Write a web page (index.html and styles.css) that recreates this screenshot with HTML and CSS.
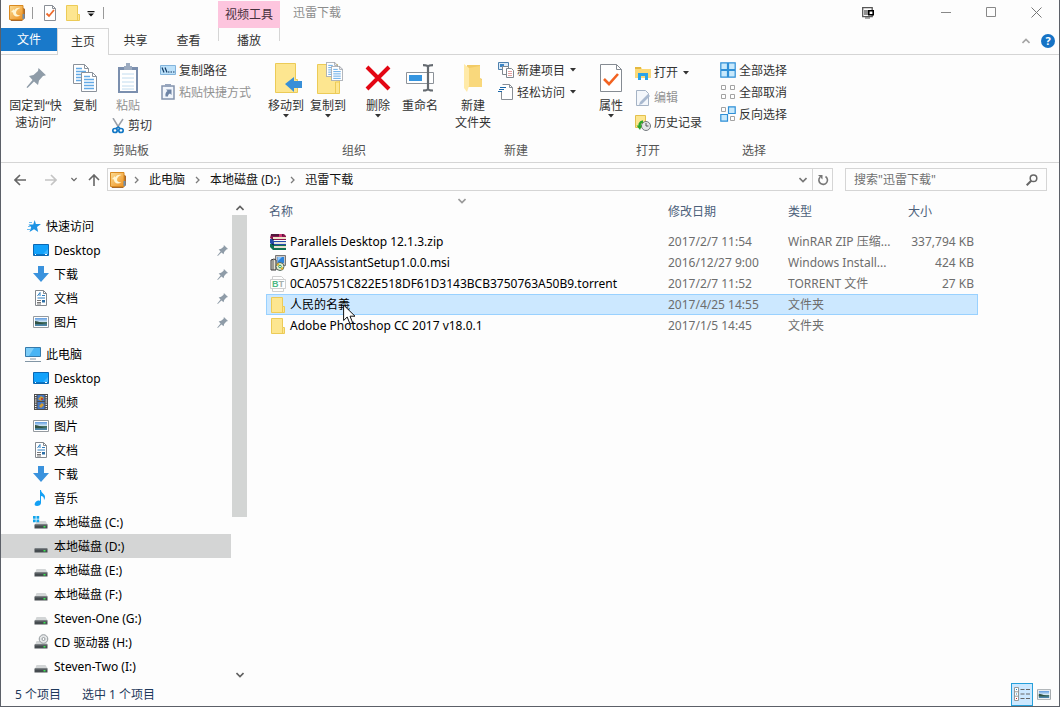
FILE: index.html
```html
<!DOCTYPE html>
<html lang="zh-CN">
<head>
<meta charset="utf-8">
<title>迅雷下载</title>
<link rel="stylesheet" href="styles.css">
</head>
<body>
<svg class="defs" aria-hidden="true">
  <defs>
    <linearGradient id="gold" x1="0" y1="0" x2="1" y2="1"><stop offset="0" stop-color="#fbdc92"/><stop offset="1" stop-color="#ee9020"/></linearGradient>
    <linearGradient id="sheet" x1="0" y1="0" x2="0" y2="1"><stop offset="0" stop-color="#5f9be0"/><stop offset=".5" stop-color="#d5e8f4"/><stop offset=".55" stop-color="#44705c"/><stop offset="1" stop-color="#4c87b8"/></linearGradient>
    <symbol id="app" viewBox="0 0 16 16"><path d="M13 2l3 2v9l-3 3H2l-1-2z" fill="#a9682a"/><path d="M.5.500h13.500v14H.5z" fill="url(#gold)" stroke="#d98a20"/><path d="M2 7l3-3v1.500C7 3 9 2.500 11.500 3 8.500 4 7 5.500 7 8c0 1.500 2 2.500 4.500 2.500C7 12.500 4 11 4 7.500z" fill="#fff6d4"/><path d="M14.500 9v5" stroke="#6d8fb0" stroke-width="2"/></symbol>
    <symbol id="doccheck" viewBox="0 0 12 16"><path d="M.5.5h8l3 3v12H.5z" fill="#fff" stroke="#8a8f96"/><path d="M8.500.5v3h3" fill="none" stroke="#8a8f96"/><path d="M2.500 8.500L5 11l5-6" fill="none" stroke="#ee6a2c" stroke-width="1.800"/></symbol>
    <symbol id="folder" viewBox="0 0 14 16"><path d="M.5.500h11v9h2v6H.5z" fill="#fde690" stroke="#eccb57"/><path d="M11.500 9.500v6" stroke="#eccb57"/></symbol>
    <symbol id="drop" viewBox="0 0 6 4"><path d="M0 0h6L3 3.500z" fill="currentColor"/></symbol>
    <symbol id="qdrop" viewBox="0 0 8 6"><path d="M.5 0h7v1.300h-7zM1 2.500h6L4 5.500z" fill="#111"/></symbol>
    <symbol id="pin" viewBox="0 0 20 20"><path d="M12.500 0L20 7.200l-3 .8-4 4.500-1 4.500-4-3.500L1.500 20l-1-.8L6.500 12 3 8l4.500-1L12 3z" fill="#8f9ca8"/></symbol>
    <symbol id="page" viewBox="0 0 16 20"><path d="M.5.5h11l4 4v15H.5z" fill="#fff" stroke="#8b929b"/><path d="M11.500.5v4h4" fill="none" stroke="#8b929b"/><path d="M3 4.500h6M3 7.500h10M3 10.500h10M3 13.500h10M3 16.500h10" stroke="#64aae6" stroke-width="1.300"/></symbol>
    <symbol id="copy" viewBox="0 0 24 28"><use href="#page" width="16" height="20"/><use href="#page" x="8" y="8" width="16" height="20"/></symbol>
    <symbol id="paste" viewBox="0 0 20 30"><path d="M0 4h20v26H0z" fill="#7b8fae"/><path d="M2 7h16v21H2z" fill="#fff"/><path d="M6 3h2V0h4v3h2v4H6z" fill="#9cabc0"/><path d="M4 11h12M4 15h12M4 19h12M4 23h12M4 26h12" stroke="#c2dcef"/></symbol>
    <symbol id="scissors" viewBox="0 0 12 16"><path d="M1 0l6 10M11 1L5 10" stroke="#9a9fa7" stroke-width="1.500"/><g fill="none" stroke="#1479c6" stroke-width="1.700"><ellipse cx="3" cy="12.500" rx="2.200" ry="2"/><ellipse cx="9" cy="12.500" rx="2.200" ry="2"/><path d="M4 10.500L6.500 9 8 10.500"/></g></symbol>
    <symbol id="copypath" viewBox="0 0 16 16"><path d="M.5 3.500h15v9H.5z" fill="#bce1fa" stroke="#82b4dc"/><path d="M2 5.500l2 5M5 5.500l2 5M8 10h1.500M10.500 10H12M13 10h1.500" stroke="#123b65" stroke-width="1.200"/></symbol>
    <symbol id="shortcut" viewBox="0 0 14 16"><path d="M1 2h12v13H1z" fill="#f1f5fb" stroke="#8393ad" stroke-width="1.500"/><path d="M4 0h6v3H4z" fill="#96a5bd"/><path d="M4.500 12.500c-.5-3 .5-4.500 2-5.500L5 5.500h5.500V11L9 9.500c-1.500.5-2 1.500-2 3z" fill="#6e84a5"/></symbol>
    <symbol id="moveto" viewBox="-6 0 34 30"><path d="M.5.500h20v16h2v13H.5z" fill="#fde690" stroke="#eccb57"/><path d="M10 21l9-7v4h8v7h-8v4z" fill="#388fd8"/></symbol>
    <symbol id="copyto" viewBox="-6 0 34 32"><path d="M.5 2.500h20v16h2v13H.5z" fill="#fde690" stroke="#eccb57"/><path d="M18.500 31v-11h4" fill="none" stroke="#eccb57"/><use href="#page" x="9" y="0" width="12" height="15"/><use href="#page" x="14" y="4" width="12" height="15"/></symbol>
    <symbol id="delete" viewBox="0 0 26 26"><path d="M2 2l22 22M24 2L2 24" stroke="#e30613" stroke-width="4"/></symbol>
    <symbol id="rename" viewBox="0 0 28 28"><path d="M.5 8.500h27v11H.5z" fill="#fff" stroke="#8c9299"/><path d="M3 11h13v6H3z" fill="#3595e0"/><path d="M22 2v24M17 1.200c3 0 5 .3 5 2 0-1.700 2-2 5-2M17 26.500c3 0 5-.3 5-2 0 1.700 2 2 5 2" fill="none" stroke="#646a70" stroke-width="2.200"/></symbol>
    <symbol id="newfolder" viewBox="0 0 18 28"><path d="M3 1h13v13l2 1v8H3z" fill="#f2cb66"/><path d="M0 0l5 4v18l-2 6-3-4z" fill="#ffeaa8"/><path d="M5 4l11-2v13l2 1v7H5z" fill="#f9d87c"/></symbol>
    <symbol id="newitem" viewBox="0 0 16 16"><path d="M.5.500h10v7H.5z" fill="#dcebf8" stroke="#4d80ad"/><path d="M2 2h4v3H2z" fill="#3c85c4"/><path d="M4.500 4.500h6v8h-6z" fill="#fff" stroke="#7f878e"/><path d="M8.500 6.500h5l2 2v7h-7z" fill="#fff" stroke="#7f878e"/><path d="M10 9.500h4M10 11.500h4M10 13.500h4" stroke="#e29f9f"/></symbol>
    <symbol id="easy" viewBox="0 0 16 16"><path d="M4.500.500h7l3 3v12h-11V8" fill="#fff" stroke="#888e95"/><path d="M11.500.5v3h3" fill="none" stroke="#888e95"/><path d="M2 3.500h6M1 5.500h5M0 7.500h4" stroke="#1a66a8" stroke-width="1.200"/></symbol>
    <symbol id="props" viewBox="0 0 22 28"><path d="M.5.500h16l5 5v22H.5z" fill="#fff" stroke="#858b92"/><path d="M16.500.5v5h5" fill="none" stroke="#858b92"/><path d="M4 15l5 5 9-10" fill="none" stroke="#f26322" stroke-width="2.600"/></symbol>
    <symbol id="open" viewBox="0 0 16 16"><path d="M0 2h6l1 2h9v9H0z" fill="#fbd978"/><path d="M0 2h6v2H0z" fill="#e5b93f"/><path d="M3 15V8h10v7h-3v-4H6v4z" fill="#29a3ea"/></symbol>
    <symbol id="edit" viewBox="0 0 14 16"><path d="M.5.500h9l3 3v12H.5z" fill="#f4f7fb" stroke="#a5b3c5"/><path d="M4 12l8-8 2 2-8 8-3 1z" fill="#a9b9cf"/></symbol>
    <symbol id="history" viewBox="0 0 16 16"><path d="M.5.500h10v12H.5z" fill="#fde690" stroke="#e3c04d"/><circle cx="11" cy="11" r="4.500" fill="#e4e6e8" stroke="#74797e"/><path d="M11 8v3h2.500" fill="none" stroke="#555"/><path d="M8 6.500C4.500 7 4 10 5 12.500" fill="none" stroke="#2aa52c" stroke-width="2.400"/><path d="M1.500 10.500h5.500L5 15z" fill="#2aa52c"/></symbol>
    <symbol id="selall" viewBox="0 0 16 16"><g fill="#c8e9fc" stroke="#2f8fd6" stroke-width="1.200"><path d="M.8.800h6.700v6.700H.8zM8.500.800h6.700v6.700H8.500zM.8 8.500h6.700v6.700H.8zM8.500 8.500h6.700v6.700H8.500z"/></g></symbol>
    <symbol id="selnone" viewBox="0 0 16 16"><path d="M1.500 1.500h4v4h-4zM10.500 1.500h4v4h-4zM1.500 10.500h4v4h-4zM10.500 10.500h4v4h-4z" fill="#fff" stroke="#a3a3a3"/></symbol>
    <symbol id="selinv" viewBox="0 0 16 16"><path d="M1.500 1.500h4v4h-4zM10.500 10.500h4v4h-4z" fill="#fff" stroke="#a3a3a3"/><path d="M8.500.800h6.700v6.700H8.500zM.8 8.500h6.700v6.700H.8z" fill="#c8e9fc" stroke="#2f8fd6" stroke-width="1.200"/></symbol>
    <symbol id="up" viewBox="0 0 8 6"><path d="M.5 5L4 1.500 7.500 5" fill="none" stroke="currentColor" stroke-width="1.600"/></symbol>
    <symbol id="down" viewBox="0 0 8 6"><path d="M.5 1L4 4.500 7.500 1" fill="none" stroke="currentColor" stroke-width="1.600"/></symbol>
    <symbol id="right" viewBox="0 0 5 8"><path d="M1 1l3 3-3 3" fill="none" stroke="#7c7c7c" stroke-width="1.300"/></symbol>
    <symbol id="arrow" viewBox="0 0 12 12"><path d="M12 6H1.500M6 1L1 6l5 5" fill="none" stroke="currentColor" stroke-width="1.600"/></symbol>
    <symbol id="star" viewBox="0 0 16 16"><path d="M9.700 2l1.200 4H16l-4 3 1.200 5-4.200-2.800L4.500 14l1.700-4.700L3.500 6.500h4.700z" fill="#1d93e4"/><path d="M4 4.500h3M2 11.500h3M3 8.500h2" stroke="#6cbcf0"/></symbol>
    <symbol id="desktop" viewBox="0 0 16 16"><path d="M.5 2.500h15v11H.5z" fill="#12a2fb" stroke="#0a68b4"/><path d="M1 12.500h14" stroke="#0a75c4"/><path d="M10 12l5-5v5z" fill="#3cb5ff"/><path d="M2 12.500h1M12 12.500h2" stroke="#fff"/></symbol>
    <symbol id="downloads" viewBox="0 0 16 16"><path d="M5 0h6v7h5l-8 9-8-9h5z" fill="#3a92dd"/></symbol>
    <symbol id="docs" viewBox="0 0 16 16"><path d="M2.500.500h8l3 3v12h-11z" fill="#fff" stroke="#82888e"/><path d="M10.500.5v3h3" fill="none" stroke="#82888e"/><path d="M4.500 6L7 2.500V6M9 5.500h3M4.500 8h7.500" fill="none" stroke="#2c7fc2"/><path d="M4 10.500h4M4 12.500h4M4 14h4" stroke="#777"/><path d="M9 10h3v2.500H9z" fill="#2b6ea6"/></symbol>
    <symbol id="pics" viewBox="0 0 16 12"><path d="M.5.500h15v11H.5z" fill="#fff" stroke="#949a9f"/><path d="M2 2h12v8H2z" fill="url(#sheet)"/><path d="M2 5c4 0 7 3 12 3H2z" fill="#315345"/></symbol>
    <symbol id="pc" viewBox="0 0 16 16"><path d="M.5 1.500h15v9H.5z" fill="#48b4f4" stroke="#367aab"/><path d="M1 2h8l-5 8H1z" fill="#7dcdf8"/><path d="M5 13h6M0 15.500h16" stroke="#8296a5"/></symbol>
    <symbol id="video" viewBox="0 0 14 16"><path d="M0 0h14v16H0z" fill="#4c4c4c"/><path d="M3.500 1h7v6h-7zM3.500 8h7v7h-7z" fill="#4477c3"/><path d="M4 5l3-3 3 2-3 3zM5 12l3-3 2 2-3 3z" fill="#d29d35"/><path d="M7 4h2v2H7z" fill="#bb4431"/><path d="M1.700 1v14M12.300 1v14" stroke="#fff" stroke-width="1.500" stroke-dasharray="1 1.200"/></symbol>
    <symbol id="music" viewBox="0 0 16 16"><path d="M7 0h1c0 3 4 4 4 7 0 2-1 3-1 3 0-3-1-4-3-4v7c0 2-2 3-4 3s-3-1-2-3 3-3 5-2z" fill="#14a0f4"/></symbol>
    <symbol id="drive" viewBox="0 0 16 16"><path d="M3.500 7h9L15 11H2z" fill="#d2d5d6"/><path d="M1.500 10.500h13v4h-13z" fill="#454b4f"/><path d="M2 11h12" stroke="#6d7377"/><path d="M10.500 12h2v1.500h-2z" fill="#39e951"/></symbol>
    <symbol id="sysdrive" viewBox="0 0 16 16"><use href="#drive" width="16" height="16"/><path d="M0 2h2.700v2.700H0zM3.500 2h2.700v2.700H3.500zM0 5.500h2.700v2.700H0zM3.500 5.500h2.700v2.700H3.500z" fill="#13a5eb"/></symbol>
    <symbol id="cd" viewBox="0 0 16 16"><use href="#drive" width="16" height="16"/><circle cx="10.500" cy="5" r="4.300" fill="#e5e7e8" stroke="#93999d"/><circle cx="10.500" cy="5" r="1.500" fill="#fff" stroke="#93999d"/></symbol>
    <symbol id="rar" viewBox="0 0 16 16"><path d="M1 0h13l2 2v4H3L0 4z" fill="#8c174f"/><path d="M3 3h13v2H3z" fill="#eee5ca"/><path d="M0 5h2l2 2h12v4H2L0 9z" fill="#244cab"/><path d="M4 8h12v2H4z" fill="#e3e3dd"/><path d="M0 10h2l2 1h12v5H3l-3-3z" fill="#137152"/><path d="M4 12h12v2H4z" fill="#e8e1cf"/><path d="M1 1h12M2 5l2 1M2 10l2 1" stroke="#161b28"/><path d="M9 0h3v3H9z" fill="#cc3b75"/></symbol>
    <symbol id="msi" viewBox="0 0 16 16"><path d="M5.500.500h10v10h-10z" fill="#c8c8c8" stroke="#777"/><path d="M7.500 2h6.500v6H7.500z" fill="#2d83da"/><path d="M8 2h4L8 6z" fill="#8cc8ff"/><path d="M1 5l3-1 2 1v10H1z" fill="#e4e2d5" stroke="#333"/><path d="M3 5v10" stroke="#555"/><circle cx="10" cy="11.500" r="4" fill="#e8ead4" stroke="#4e6559"/><circle cx="10" cy="11.500" r="1.300" fill="#fff" stroke="#23a157"/><path d="M7 10l2-1M11 14l2-1" stroke="#e0b32b" stroke-width="2"/></symbol>
    <symbol id="bt" viewBox="0 0 16 16"><path d="M2.500 3.500v-3h9l2 2v1M2.500 13v2.500h11V13" fill="#fff" stroke="#cfcfcf"/><path d="M.5 3.500h15v9H.5z" fill="#fff" stroke="#cfcfcf"/><text x="2" y="11" font-family="Liberation Sans, sans-serif" font-size="9" font-weight="700" fill="#50b886">B<tspan fill="#a5b0ab">T</tspan></text></symbol>
    <symbol id="cursor" viewBox="0 0 13 21"><path d="M.6 1v15.500L4.200 13l2.800 7 2.700-1.200L7 12.200h5z" fill="#fff" stroke="#111"/></symbol>
  </defs>
</svg>

<div class="window">
  <header class="titlebar">
    <div class="quick">
      <svg class="i16"><use href="#app"/></svg>
      <span class="sep"></span>
      <button class="plain" aria-label="属性"><svg class="q-doc"><use href="#doccheck"/></svg></button>
      <button class="plain" aria-label="新建文件夹"><svg class="q-folder"><use href="#folder"/></svg></button>
      <button class="plain" aria-label="自定义快速访问工具栏"><svg class="q-drop"><use href="#qdrop"/></svg></button>
      <span class="sep"></span>
    </div>
    <div class="context-title">视频工具</div>
    <h1 class="title">迅雷下载</h1>
    <button class="plain overlay-tool" aria-label="画中画"><svg width="12" height="12" viewBox="0 0 12 12"><path d="M.7.700h9.500v9H.7zM3 3v5M5 3v5" fill="none" stroke="#555" stroke-width="1.300"/><path d="M6.800 3.800h4.400v4H6.800z" fill="#fff" stroke="#000" stroke-width="1.600"/><path d="M3 11h5" stroke="#555"/></svg></button>
    <div class="controls">
      <button class="plain" aria-label="最小化"><svg width="11" height="11"><path d="M0 5.500h10" stroke="#888"/></svg></button>
      <button class="plain" aria-label="最大化"><svg width="11" height="11"><path d="M.5.500h9v9H.5z" fill="none" stroke="#888"/></svg></button>
      <button class="plain" aria-label="关闭"><svg width="11" height="11"><path d="M.5.500l10 10M10.500.500l-10 10" stroke="#777"/></svg></button>
    </div>
  </header>

  <nav class="tabs">
    <button class="tab file">文件</button>
    <button class="tab active">主页</button>
    <button class="tab">共享</button>
    <button class="tab">查看</button>
    <button class="tab play">播放</button>
    <span class="grow"></span>
    <button class="plain collapse" aria-label="最小化功能区"><svg class="caret"><use href="#up"/></svg></button>
    <button class="help" aria-label="帮助">?</button>
  </nav>

  <section class="ribbon">
    <div class="group g-clip">
      <div class="tools">
        <button class="big wide"><svg class="pinbig"><use href="#pin"/></svg><span>固定到“快<br>速访问”</span></button>
        <button class="big copybtn"><svg width="24" height="28"><use href="#copy"/></svg><span>复制</span></button>
        <div class="pastecol">
          <button class="big muted pastebtn"><svg width="20" height="30"><use href="#paste"/></svg><span>粘贴</span></button>
          <button class="small cut"><svg width="12" height="16"><use href="#scissors"/></svg>剪切</button>
        </div>
        <div class="stack">
          <button class="small"><svg class="i16"><use href="#copypath"/></svg>复制路径</button>
          <button class="small muted"><svg class="i16"><use href="#shortcut"/></svg>粘贴快捷方式</button>
        </div>
      </div>
      <h2>剪贴板</h2>
    </div>
    <div class="group g-org">
      <div class="tools">
        <button class="big"><svg width="34" height="30"><use href="#moveto"/></svg><span>移动到</span><svg class="drop"><use href="#drop"/></svg></button>
        <button class="big"><svg width="34" height="32"><use href="#copyto"/></svg><span>复制到</span><svg class="drop"><use href="#drop"/></svg></button>
        <button class="big del"><svg width="26" height="26"><use href="#delete"/></svg><span>删除</span><svg class="drop"><use href="#drop"/></svg></button>
        <button class="big"><svg width="28" height="28"><use href="#rename"/></svg><span>重命名</span></button>
      </div>
      <h2>组织</h2>
    </div>
    <div class="group g-new">
      <div class="tools">
        <button class="big"><svg width="18" height="28"><use href="#newfolder"/></svg><span>新建<br>文件夹</span></button>
        <div class="stack">
          <button class="small"><svg class="i16"><use href="#newitem"/></svg>新建项目<svg class="drop"><use href="#drop"/></svg></button>
          <button class="small"><svg class="i16"><use href="#easy"/></svg>轻松访问<svg class="drop"><use href="#drop"/></svg></button>
        </div>
      </div>
      <h2>新建</h2>
    </div>
    <div class="group g-open">
      <div class="tools">
        <button class="big propbtn"><svg width="22" height="28"><use href="#props"/></svg><span>属性</span><svg class="drop"><use href="#drop"/></svg></button>
        <div class="stack loose">
          <button class="small"><svg class="i16"><use href="#open"/></svg>打开<svg class="drop"><use href="#drop"/></svg></button>
          <button class="small muted"><svg class="i16"><use href="#edit"/></svg>编辑</button>
          <button class="small"><svg class="i16"><use href="#history"/></svg>历史记录</button>
        </div>
      </div>
      <h2>打开</h2>
    </div>
    <div class="group g-sel">
      <div class="tools">
        <div class="stack">
          <button class="small"><svg class="i16"><use href="#selall"/></svg>全部选择</button>
          <button class="small"><svg class="i16"><use href="#selnone"/></svg>全部取消</button>
          <button class="small"><svg class="i16"><use href="#selinv"/></svg>反向选择</button>
        </div>
      </div>
      <h2>选择</h2>
    </div>
  </section>

  <div class="navbar">
    <div class="history">
      <button class="plain" aria-label="后退"><svg class="arr"><use href="#arrow"/></svg></button>
      <button class="plain off" aria-label="前进"><svg class="arr fwd"><use href="#arrow"/></svg></button>
      <button class="plain" aria-label="最近浏览的位置"><svg class="recent"><use href="#down"/></svg></button>
      <button class="plain" aria-label="上移"><svg class="arr upward"><use href="#arrow"/></svg></button>
    </div>
    <div class="address">
      <svg class="addr-icon"><use href="#app"/></svg>
      <svg class="crumb first"><use href="#right"/></svg>
      <a href="#pc">此电脑</a>
      <svg class="crumb"><use href="#right"/></svg>
      <a href="#d">本地磁盘 (D:)</a>
      <svg class="crumb"><use href="#right"/></svg>
      <a href="#xl">迅雷下载</a>
      <span class="grow"></span>
      <button class="plain addr-drop" aria-label="以前的位置"><svg class="caret"><use href="#down"/></svg></button>
      <button class="plain refresh" aria-label="刷新"><svg width="12" height="12" viewBox="0 0 12 12"><path d="M8.500 2.500A4.300 4.300 0 1 1 3 3.200" fill="none" stroke="#777" stroke-width="1.600"/><path d="M1 1h4.500v4.500z" fill="#777"/></svg></button>
    </div>
    <label class="search">
      <input type="text" placeholder='搜索"迅雷下载"' aria-label="搜索">
      <svg width="12" height="12" viewBox="0 0 12 12"><circle cx="7.500" cy="4.300" r="3.300" fill="none" stroke="#666" stroke-width="1.500"/><path d="M5.200 6.800L.7 11.300" stroke="#666" stroke-width="2"/></svg>
    </label>
  </div>

  <div class="content">
    <aside class="side">
      <div class="tree">
        <ul>
          <li><a class="root" href="#quick"><svg class="i16"><use href="#star"/></svg>快速访问</a></li>
          <li><a href="#desk"><svg class="i16"><use href="#desktop"/></svg>Desktop<svg class="pinned"><use href="#pin"/></svg></a></li>
          <li><a href="#dl"><svg class="i16"><use href="#downloads"/></svg>下载<svg class="pinned"><use href="#pin"/></svg></a></li>
          <li><a href="#doc"><svg class="i16"><use href="#docs"/></svg>文档<svg class="pinned"><use href="#pin"/></svg></a></li>
          <li><a href="#pic"><svg class="i16"><use href="#pics"/></svg>图片<svg class="pinned"><use href="#pin"/></svg></a></li>
        </ul>
        <ul>
          <li><a class="root" href="#pc"><svg class="i16"><use href="#pc"/></svg>此电脑</a></li>
          <li><a href="#desk"><svg class="i16"><use href="#desktop"/></svg>Desktop</a></li>
          <li><a href="#vid"><svg class="i16"><use href="#video"/></svg>视频</a></li>
          <li><a href="#pic"><svg class="i16"><use href="#pics"/></svg>图片</a></li>
          <li><a href="#doc"><svg class="i16"><use href="#docs"/></svg>文档</a></li>
          <li><a href="#dl"><svg class="i16"><use href="#downloads"/></svg>下载</a></li>
          <li><a href="#mus"><svg class="i16"><use href="#music"/></svg>音乐</a></li>
          <li><a href="#c"><svg class="i16"><use href="#sysdrive"/></svg>本地磁盘 (C:)</a></li>
          <li><a class="current" href="#d"><svg class="i16"><use href="#drive"/></svg>本地磁盘 (D:)</a></li>
          <li><a href="#e"><svg class="i16"><use href="#drive"/></svg>本地磁盘 (E:)</a></li>
          <li><a href="#f"><svg class="i16"><use href="#drive"/></svg>本地磁盘 (F:)</a></li>
          <li><a href="#g"><svg class="i16"><use href="#drive"/></svg>Steven-One (G:)</a></li>
          <li><a href="#h"><svg class="i16"><use href="#cd"/></svg>CD 驱动器 (H:)</a></li>
          <li><a href="#i"><svg class="i16"><use href="#drive"/></svg>Steven-Two (I:)</a></li>
        </ul>
      </div>
      <div class="scroll">
        <button class="plain" aria-label="向上滚动"><svg class="caret"><use href="#up"/></svg></button>
        <span class="thumb"></span>
        <span class="track"></span>
        <button class="plain" aria-label="向下滚动"><svg class="caret"><use href="#down"/></svg></button>
      </div>
    </aside>
    <main class="files">
      <table>
        <colgroup><col><col class="c-date"><col class="c-type"><col class="c-size"></colgroup>
        <thead>
          <tr><th scope="col" class="name">名称<svg class="sort"><use href="#down"/></svg></th><th scope="col">修改日期</th><th scope="col">类型</th><th scope="col">大小</th></tr>
        </thead>
        <tbody>
          <tr><td class="name"><div><svg class="i16"><use href="#rar"/></svg>Parallels Desktop 12.1.3.zip</div></td><td>2017/2/7 11:54</td><td>WinRAR ZIP 压缩...</td><td class="size">337,794 KB</td></tr>
          <tr><td class="name"><div><svg class="i16"><use href="#msi"/></svg>GTJAAssistantSetup1.0.0.msi</div></td><td>2016/12/27 9:00</td><td>Windows Install...</td><td class="size">424 KB</td></tr>
          <tr><td class="name"><div><svg class="i16"><use href="#bt"/></svg>0CA05751C822E518DF61D3143BCB3750763A50B9.torrent</div></td><td>2017/2/7 11:52</td><td>TORRENT 文件</td><td class="size">27 KB</td></tr>
          <tr class="selected"><td class="name"><div><svg class="i16"><use href="#folder"/></svg>人民的名義<svg class="cursor"><use href="#cursor"/></svg></div></td><td>2017/4/25 14:55</td><td>文件夹</td><td></td></tr>
          <tr><td class="name"><div><svg class="i16"><use href="#folder"/></svg>Adobe Photoshop CC 2017 v18.0.1</div></td><td>2017/1/5 14:45</td><td>文件夹</td><td></td></tr>
        </tbody>
      </table>
    </main>
  </div>

  <footer class="status">
    <span>5 个项目</span>
    <span>选中 1 个项目</span>
    <span class="grow"></span>
    <div class="views">
      <button class="view on" aria-label="详细信息"><svg width="16" height="14" viewBox="0 0 16 14"><path d="M.5.500h4v13h-4zM.5 4.800h4M.5 9.200h4" fill="#fff" stroke="#999"/><path d="M6.500 2.500h4M12 2.500h4M6.500 7h4M12 7h4M6.500 11.500h4M12 11.500h4" stroke="#666"/><path d="M2 2h1v1H2z" fill="#28b"/><path d="M2 6.500h1v1H2z" fill="#28b"/><path d="M2 11h1v1H2z" fill="#c22"/></svg></button>
      <button class="view" aria-label="大图标"><svg width="14" height="11"><use href="#pics"/></svg></button>
    </div>
  </footer>
</div>
</body>
</html>
```

FILE: styles.css
```css
* { box-sizing: border-box; }
body {
  margin: 0;
  font: 12px/17px "Noto Sans", "Noto Sans CJK SC", sans-serif;
  color: #111;
  background: #fdfdfd;
}
button, input { font: inherit; color: inherit; }
button { border: 0; background: none; padding: 0; }
a { color: inherit; text-decoration: none; }
h1, h2 { margin: 0; font: inherit; }
ul { list-style: none; margin: 0; padding: 0; }
svg { display: block; flex: none; }
.defs { position: absolute; width: 0; height: 0; }
.grow { flex: 1; }
.i16 { width: 16px; height: 16px; }
.caret { width: 8px; height: 6px; }
.drop { width: 6px; height: 4px; color: #333; }
.plain { display: flex; align-items: center; justify-content: center; }

.window {
  min-height: 100vh;
  display: flex;
  flex-direction: column;
  border: 1px solid #5c6068;
  border-top: 0;
}

.titlebar { display: flex; height: 28px; }
.quick { width: 217px; display: flex; align-items: center; padding: 0 0 3px 8px; }
.sep { width: 1px; height: 12px; background: #999; }
.quick .sep:nth-of-type(1) { margin: 0 11px 0 7px; }
.q-doc { width: 12px; height: 16px; }
.q-folder { width: 14px; height: 16px; margin-left: 10px; }
.q-drop { width: 8px; height: 6px; margin: 3px 8px 0 7px; }
.context-title {
  width: 62px;
  margin-top: 1px;
  background: #fdc5de;
  color: #45303c;
  text-align: center;
  line-height: 27px;
}
.title { flex: 1; padding-left: 13px; line-height: 25px; color: #8c8c8c; }
.overlay-tool { width: 24px; height: 25px; margin-right: 44px; }
.controls { display: flex; height: 25px; }
.controls .plain { width: 45px; }

.tabs { display: flex; height: 27px; border-bottom: 1px solid #d5d5d5; }
.tab { width: 53px; padding-bottom: 1px; color: #333; }
.tab.file { width: 56px; height: 23px; background: #1979ca; color: #fff; }
.tab.active {
  width: 52px;
  margin-bottom: -1px;
  border: 1px solid #d5d5d5;
  border-bottom: 0;
  background: #fdfdfd;
}
.tab.play {
  width: 62px;
  margin-left: 3px;
  background:
    linear-gradient(#d5d5d5, #d5d5d5) left top / 1px 13px no-repeat,
    linear-gradient(#d5d5d5, #d5d5d5) right top / 1px 13px no-repeat;
}
.collapse { width: 20px; color: #a5a5a5; }
.help {
  width: 14px;
  height: 14px;
  margin: 6px 4px 0 5px;
  border-radius: 50%;
  background: #1673c5;
  color: #fff;
  font-weight: 700;
  font-size: 11px;
  line-height: 14px;
}

.ribbon { display: flex; height: 108px; border-bottom: 1px solid #d5d5d5; color: #333; }
.group { display: flex; flex-direction: column; }
.group h2 { text-align: center; color: #555; }
.tools { display: flex; height: 87px; padding-top: 4px; }
.g-clip { width: 260px; }
.g-org { width: 186px; }
.g-new { width: 138px; }
.g-open { width: 126px; }
.g-sel { width: 86px; }
.g-clip .tools { padding-left: 4px; }
.g-org .tools { padding-left: 4px; }
.g-new .tools { padding-left: 5px; gap: 4px; }
.g-open .tools, .g-sel .tools { padding-left: 9px; }
.big {
  width: 42px;
  display: grid;
  grid-template-rows: 38px auto 4px;
  justify-items: center;
  align-items: center;
  align-content: start;
  white-space: nowrap;
  text-align: center;
}
.big .drop { align-self: start; }
.big.wide { width: 61px; }
.pinbig { width: 20px; height: 20px; }
.copybtn { width: 38px; }
.big.del { margin-left: 8px; }
.pastecol { width: 56px; padding-left: 4px; }
.pastebtn { width: 40px; height: 58px; }
.propbtn { width: 34px; margin-right: 7px; }
.stack .small { height: 22px; }
.stack.loose { padding-top: 1px; }
.stack.loose .small { height: 25px; }
.small { display: flex; align-items: center; gap: 3px; white-space: nowrap; }
.small .drop { margin-left: 2px; }
.cut { gap: 4px; margin-left: 4px; }
.muted { color: #929292; }

.navbar { display: flex; height: 33px; padding: 5px 12px 5px 0; }
.history { width: 106px; display: flex; align-items: center; justify-content: space-between; padding: 0 7px 0 13px; color: #666; }
.arr { width: 12px; height: 12px; }
.fwd { transform: rotate(180deg); }
.upward { transform: rotate(90deg); }
.off { color: #c4c4c4; margin-left: 8px; }
.recent { width: 6px; height: 5px; margin-left: 4px; }
.address { flex: 1; display: flex; align-items: center; border: 1px solid #d5d5d5; }
.addr-icon { width: 16px; height: 16px; margin-left: 2px; }
.crumb { width: 5px; height: 8px; margin: 0 10px; }
.crumb.first { margin-left: 8px; }
.addr-drop { width: 18px; color: #777; }
.refresh { width: 20px; height: 21px; border-left: 1px solid #d5d5d5; }
.search {
  width: 202px;
  margin-left: 12px;
  padding: 0 8px;
  display: flex;
  align-items: center;
  border: 1px solid #d5d5d5;
}
.search input { flex: 1; min-width: 0; border: 0; padding: 0; outline: 0; background: none; }
.search input::placeholder { color: #707070; opacity: 1; }

.content { flex: 1; display: flex; }
.side { width: 246px; display: flex; }
.tree { width: 230px; padding-top: 18px; }
.tree ul + ul { margin-top: 8px; }
.tree a { display: flex; align-items: center; gap: 5px; height: 24px; padding: 0 3px 0 32px; color: #000; }
.tree a.root { padding-left: 24px; }
.tree a.current { background: #d4d5d5; }
.pinned { width: 11px; height: 11px; margin-left: auto; }
.scroll { width: 15px; margin-left: 1px; display: flex; flex-direction: column; padding-top: 4px; color: #606060; }
.scroll .plain { height: 15px; }
.thumb { flex: 302; background: #d3d5d4; }
.track { flex: 150; }

.files { flex: 1; padding: 0 81px 0 19px; }
table { width: 100%; table-layout: fixed; border-collapse: collapse; }
.c-date, .c-type { width: 120px; }
.c-size { width: 78px; }
th { position: relative; height: 35px; padding: 0 0 5px 8px; text-align: left; font-weight: 400; color: #4c607a; }
th.name { padding-left: 3px; }
.sort { position: absolute; top: 2px; left: 50%; width: 8px; height: 6px; margin-left: -5px; color: #999; }
td { height: 21px; padding: 0 0 0 8px; color: #6d6d6d; white-space: nowrap; }
td.name { padding-left: 4px; color: #000; }
td.name div { position: relative; display: flex; align-items: center; gap: 4px; }
td.size { padding: 0 4px 0 0; text-align: right; }
.selected td { background: #cce8ff; box-shadow: inset 0 1px #99d1ff, inset 0 -1px #99d1ff; }
.selected td:first-child { box-shadow: inset 0 1px #99d1ff, inset 0 -1px #99d1ff, inset 1px 0 #99d1ff; }
.selected td:last-child { box-shadow: inset 0 1px #99d1ff, inset 0 -1px #99d1ff, inset -1px 0 #99d1ff; }
.cursor { position: absolute; left: 73px; top: 8px; z-index: 1; width: 13px; height: 21px; }

.status { display: flex; align-items: center; height: 24px; padding: 0 4px 0 14px; gap: 21px; color: #1e395b; }
.views { display: flex; }
.view { width: 22px; height: 23px; display: flex; align-items: center; justify-content: center; }
.view.on { background: #cce8ff; border: 1px solid #26a0da; }
```
